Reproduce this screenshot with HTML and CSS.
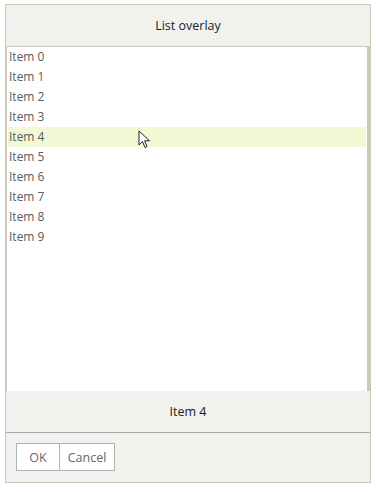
FILE: index.html
```html
<!DOCTYPE html>
<html lang="en">
<head>
    <meta charset="UTF-8">
    <title>List overlay</title>
    <link rel="stylesheet" href="styles.css">
</head>
<body>
    <div class="dialog">
        <div class="header">List overlay</div>

        <div class="list">
            <div class="item">Item 0</div>
            <div class="item">Item 1</div>
            <div class="item">Item 2</div>
            <div class="item">Item 3</div>
            <div class="item hover">Item 4</div>
            <div class="item">Item 5</div>
            <div class="item">Item 6</div>
            <div class="item">Item 7</div>
            <div class="item">Item 8</div>
            <div class="item">Item 9</div>

            <!-- mouse pointer over the hovered row -->
            <svg class="cursor" width="13" height="20" viewBox="0 0 13 20">
                <path d="M1 1 L1 15 L4.5 11.5 L7 17.5 L9 16.6 L6.6 10.8 L11.5 10.8 Z" fill="#fff" stroke="#222" stroke-width="1" stroke-linejoin="miter"/>
            </svg>
        </div>

        <div class="selection">Item 4</div>

        <div class="footer">
            <button class="btn">OK</button>
            <button class="btn">Cancel</button>
        </div>
    </div>
</body>
</html>
```

FILE: styles.css
```css
* {
    margin: 0;
    padding: 0;
    box-sizing: border-box;
}

body {
    font-family: 'Open Sans', 'DejaVu Sans', sans-serif;
    font-size: 12px;
    color: #555;
    background: #fff;
    padding: 4px 5px;
}

.dialog {
    width: 366px;
    height: 479px;
    border: 1px solid #c9c9b9;
    background: #f1f2ee;
    display: flex;
    flex-direction: column;
}

.header {
    height: 42px;
    border-bottom: 1px solid #c9c9b9;
    display: flex;
    align-items: center;
    justify-content: center;
    color: #222;
    font-size: 12.5px;
}

.list {
    position: relative;
    height: 344px;
    background: #fff;
    border-left: 1px solid #c9c9b9;
    border-right: 3px solid #c9c9b9;
    padding: 0 0 0 1px;
}

.item {
    height: 20px;
    line-height: 20px;
    padding-left: 1px;
    margin-right: 1px;
    color: #5a5a5a;
}

.item.hover {
    background: #f1f8d4;
}

.cursor {
    position: absolute;
    left: 131px;
    top: 83px;
}

.selection {
    height: 42px;
    border-bottom: 1px solid #a8a8a8;
    display: flex;
    align-items: center;
    justify-content: center;
    color: #222;
    font-size: 12.5px;
}

.footer {
    flex: 1;
    display: flex;
    align-items: flex-start;
    padding: 10px 10px;
}

.btn {
    height: 28px;
    padding: 0 4px;
    border: 1px solid #b2b2b2;
    background: #fff;
    color: #666;
    font-family: 'Open Sans', 'DejaVu Sans', sans-serif;
    font-size: 12.5px;
    cursor: pointer;
}

.btn:first-child {
    width: 44px;
}

.btn + .btn {
    border-left: none;
    width: 55px;
}
```
